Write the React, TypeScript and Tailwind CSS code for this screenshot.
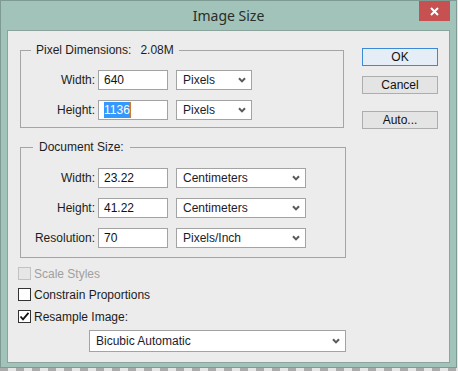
import React from "react";

const font = "font-['Liberation_Sans',Arial,sans-serif]";

function Chevron() {
  return (
    <svg width="8" height="6" viewBox="0 0 8 6" className="shrink-0">
      <path d="M1 1.2 L4 4.4 L7 1.2" fill="none" stroke="#5a5a5a" strokeWidth="2" />
    </svg>
  );
}

function Select({ text, w, h = 20 }: { text: string; w: string; h?: number }) {
  return (
    <div
      className={`${w} ${h === 20 ? "h-[20px]" : "h-[22px]"} bg-white border border-[#a3a3a3] flex items-center pl-[6px] pr-[5px] text-[#1b1b30]`}
    >
      <span className="flex-1 leading-[16px]">{text}</span>
      <Chevron />
    </div>
  );
}

function Field({ children }: { children: React.ReactNode }) {
  return (
    <div className="w-[70px] h-[20px] bg-white border border-[#a3a3a3] flex items-center pl-[5px] text-[#111]">
      {children}
    </div>
  );
}

function Row({
  label,
  value,
  unit,
  unitW,
  className = "",
}: {
  label: string;
  value: React.ReactNode;
  unit: string;
  unitW: string;
  className?: string;
}) {
  return (
    <div className={`flex items-center h-[20px] ${className}`}>
      <div className="w-[74px] text-right text-[#1c1c1c] leading-[16px]">{label}</div>
      <div className="ml-[3px]">
        <Field>{value}</Field>
      </div>
      <div className="ml-[8px]">
        <Select text={unit} w={unitW} />
      </div>
    </div>
  );
}

function Button({ label, primary = false, className = "" }: { label: string; primary?: boolean; className?: string }) {
  return (
    <div
      className={`w-[76px] h-[18px] flex items-center justify-center border ${
        primary ? "border-[#3c8ad6] bg-[#e5eef7]" : "border-[#adadad] bg-[#e4e4e4]"
      } text-[#111] leading-[16px] ${className}`}
    >
      {label}
    </div>
  );
}

function Check({ checked = false, disabled = false, label, className = "" }: { checked?: boolean; disabled?: boolean; label: string; className?: string }) {
  return (
    <div className={`flex items-center h-[13px] ${className}`}>
      <div
        className={`w-[13px] h-[13px] border flex items-center justify-center ${
          disabled ? "border-[#c2c2c2] bg-[#e6e6e6]" : "border-[#333] bg-white"
        }`}
      >
        {checked && (
          <svg width="11" height="11" viewBox="0 0 11 11">
            <path d="M1.5 5.5 L4 8.3 L9.5 1.8" fill="none" stroke="#111" strokeWidth="1.8" />
          </svg>
        )}
      </div>
      <span className={`ml-[3px] leading-[16px] ${disabled ? "text-[#a0a0a0]" : "text-[#1c1c1c]"}`}>{label}</span>
    </div>
  );
}

export default function App() {
  return (
    <div
      className={`w-[458px] h-[371px] bg-[repeating-linear-gradient(90deg,#ababab_0px,#ababab_8px,#e6e6e6_8px,#e6e6e6_16px)] ${font} text-[12px]`}
    >
      <div className="w-[457px] h-[368px] border border-[#7d9b93] bg-[#a1c3b9] flex flex-col">
        {/* Title bar */}
        <div className="h-[29px] relative flex items-center justify-center">
          <span className="font-['Noto_Sans',sans-serif] text-[14px] text-[#2a2d2a] leading-[20px]">Image Size</span>
          <div className="absolute right-[6px] top-0 w-[31px] h-[20px] bg-[#c75050] flex items-center justify-center">
            <svg width="9" height="9" viewBox="0 0 9 9">
              <path d="M1 1 L8 8 M8 1 L1 8" stroke="#fff" strokeWidth="2" />
            </svg>
          </div>
        </div>

        {/* Client */}
        <div className="mx-[6px] h-[333px] border border-[#8aa49c] bg-[#ececec] flex">
          {/* Left column */}
          <div className="pl-[12px] pt-[19px] flex flex-col">
            {/* Pixel Dimensions */}
            <div className="relative w-[324px] h-[78px] border border-[#a5a5a5] pt-[19px] flex flex-col">
              <div className="absolute left-[10px] top-[-9px] h-[16px] px-[5px] bg-[#ececec] leading-[16px] text-[#1c1c1c] flex">
                <span>Pixel Dimensions:</span>
                <span className="ml-[9px]">2.08M</span>
              </div>
              <Row label="Width:" value={<span className="leading-[16px]">640</span>} unit="Pixels" unitW="w-[76px]" />
              <Row
                className="mt-[10px]"
                label="Height:"
                value={
                  <span className="flex items-center">
                    <span className="bg-[#3399ff] text-white leading-[16px]">1136</span>
                    <span className="w-[1px] h-[16px] bg-[#d07a30]" />
                  </span>
                }
                unit="Pixels"
                unitW="w-[76px]"
              />
            </div>

            {/* Document Size */}
            <div className="relative mt-[19px] w-[326px] h-[111px] border border-[#a5a5a5] pt-[20px] flex flex-col">
              <div className="absolute left-[12px] top-[-9px] h-[16px] px-[6px] bg-[#ececec] leading-[16px] text-[#1c1c1c]">
                Document Size:
              </div>
              <Row label="Width:" value={<span className="leading-[16px]">23.22</span>} unit="Centimeters" unitW="w-[130px]" />
              <Row className="mt-[10px]" label="Height:" value={<span className="leading-[16px]">41.22</span>} unit="Centimeters" unitW="w-[130px]" />
              <Row className="mt-[10px]" label="Resolution:" value={<span className="leading-[16px]">70</span>} unit="Pixels/Inch" unitW="w-[130px]" />
            </div>

            {/* Checkboxes */}
            <div className="-ml-[2px] flex flex-col">
              <Check className="mt-[9px]" disabled label="Scale Styles" />
              <Check className="mt-[8px]" label="Constrain Proportions" />
              <Check className="mt-[9px]" checked label="Resample Image:" />
            </div>
            <div className="mt-[7px] ml-[69px]">
              <Select text="Bicubic Automatic" w="w-[257px]" h={22} />
            </div>
          </div>

          {/* Buttons */}
          <div className="ml-[16px] pt-[17px] flex flex-col">
            <Button label="OK" primary />
            <Button label="Cancel" className="mt-[10px]" />
            <Button label="Auto..." className="mt-[17px]" />
          </div>
        </div>
      </div>
    </div>
  );
}
